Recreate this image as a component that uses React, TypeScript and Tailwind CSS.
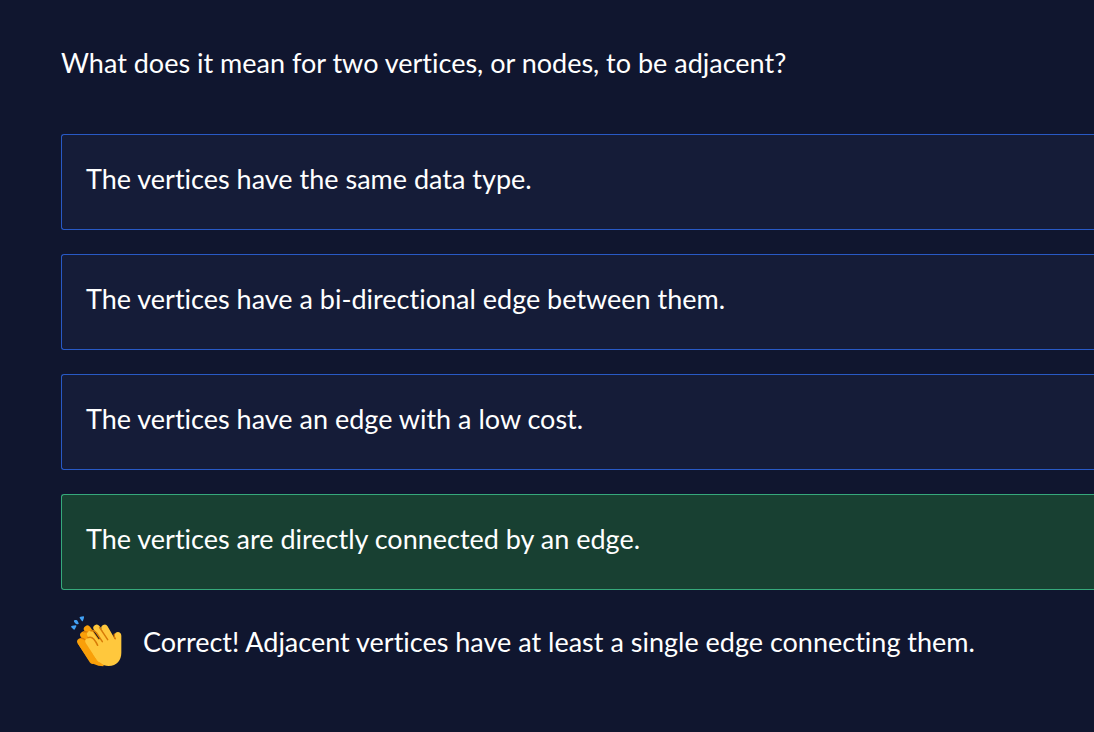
import React from "react";

type Answer = { id: string; text: string; correct?: boolean };

const answers: Answer[] = [
  { id: "type", text: "The vertices have the same data type." },
  { id: "bidirectional", text: "The vertices have a bi-directional edge between them." },
  { id: "cost", text: "The vertices have an edge with a low cost." },
  { id: "direct", text: "The vertices are directly connected by an edge.", correct: true },
];

function ClapIcon() {
  return (
    <svg viewBox="33 32 153 153" className="size-[51px] shrink-0" aria-hidden="true">
      <g fill="#42a1f5">
        <path d="M34 66q-2-5 3-5l10-1q3 0 2 3l-4 8q-2 4-5 1z" />
        <path d="M42 49q-2-5 3-5l4 0q3 1 5 5l2 5q1 3-3 3l-3 0q-3-1-5-4z" />
        <path d="M59 38q-1-4 3-4l8-1q3 0 2 4l-3 9q-2 4-4 0z" />
      </g>
      {/* Back hand */}
      <g fill="none" stroke="#f99f09" strokeWidth="21" strokeLinecap="round">
        <path d="M62 109L98 165" />
        <path d="M71 89L115 150" />
        <path d="M82 71L120 125" />
      </g>
      <path fill="#f99f09" d="M53 114L84 160Q98 182 130 183L150 130L85 90Z" />
      <g fill="none" stroke="#d87b08" strokeWidth="4" strokeLinecap="round">
        <path d="M63 99Q69 98 75 103" />
        <path d="M71 80Q79 77 86 83" />
      </g>
      {/* Front hand */}
      <g fill="none" stroke="#ffc83d" strokeWidth="20" strokeLinecap="round">
        <path d="M86 108L120 160" />
        <path d="M91 87L135 150" />
        <path d="M110 68L150 125" />
        <path d="M134 68L158 110" />
      </g>
      <path
        fill="#ffc83d"
        d="M94 116L140 88L156 103C163 107 166 101 164 92C162 77 184 76 184 91L184 142C184 164 170 182 146 182C136 182 128 178 121 172Q110 164 101 149Z"
      />
      <g fill="none" stroke="#d87b08" strokeWidth="4.5" strokeLinecap="round" strokeLinejoin="round">
        <path d="M84 97Q94 93 101 101Q108 109 113 120" />
        <path d="M93 76Q102 73 109 82L127 109" />
        <path d="M119 67L143 103" />
        <path d="M163 87Q161 94 166 100" />
      </g>
    </svg>
  );
}

export default function App() {
  return (
    <main className="min-h-screen bg-[#10162f] pt-[45px] pb-10 pl-[61px] font-['Lato','Noto_Sans',sans-serif] text-[27px] leading-9 text-white [font-variant-ligatures:none]">
      <h1 id="question">What does it mean for two vertices, or nodes, to be adjacent?</h1>
      <div role="group" aria-labelledby="question" className="mt-[53px] flex flex-col gap-6">
        {answers.map((answer) => (
          <button
            key={answer.id}
            type="button"
            className={`h-24 rounded-l-[3px] border border-r-0 px-6 pb-1.5 text-left ${
              answer.correct ? "border-[#36a97b] bg-[#184032]" : "border-[#2859c5] bg-[#151c38]"
            }`}
          >
            {answer.text}
          </button>
        ))}
      </div>
      <div role="status" className="mt-[26px] flex items-center gap-[21px] pl-[10px]">
        <ClapIcon />
        <p>Correct! Adjacent vertices have at least a single edge connecting them.</p>
      </div>
    </main>
  );
}
